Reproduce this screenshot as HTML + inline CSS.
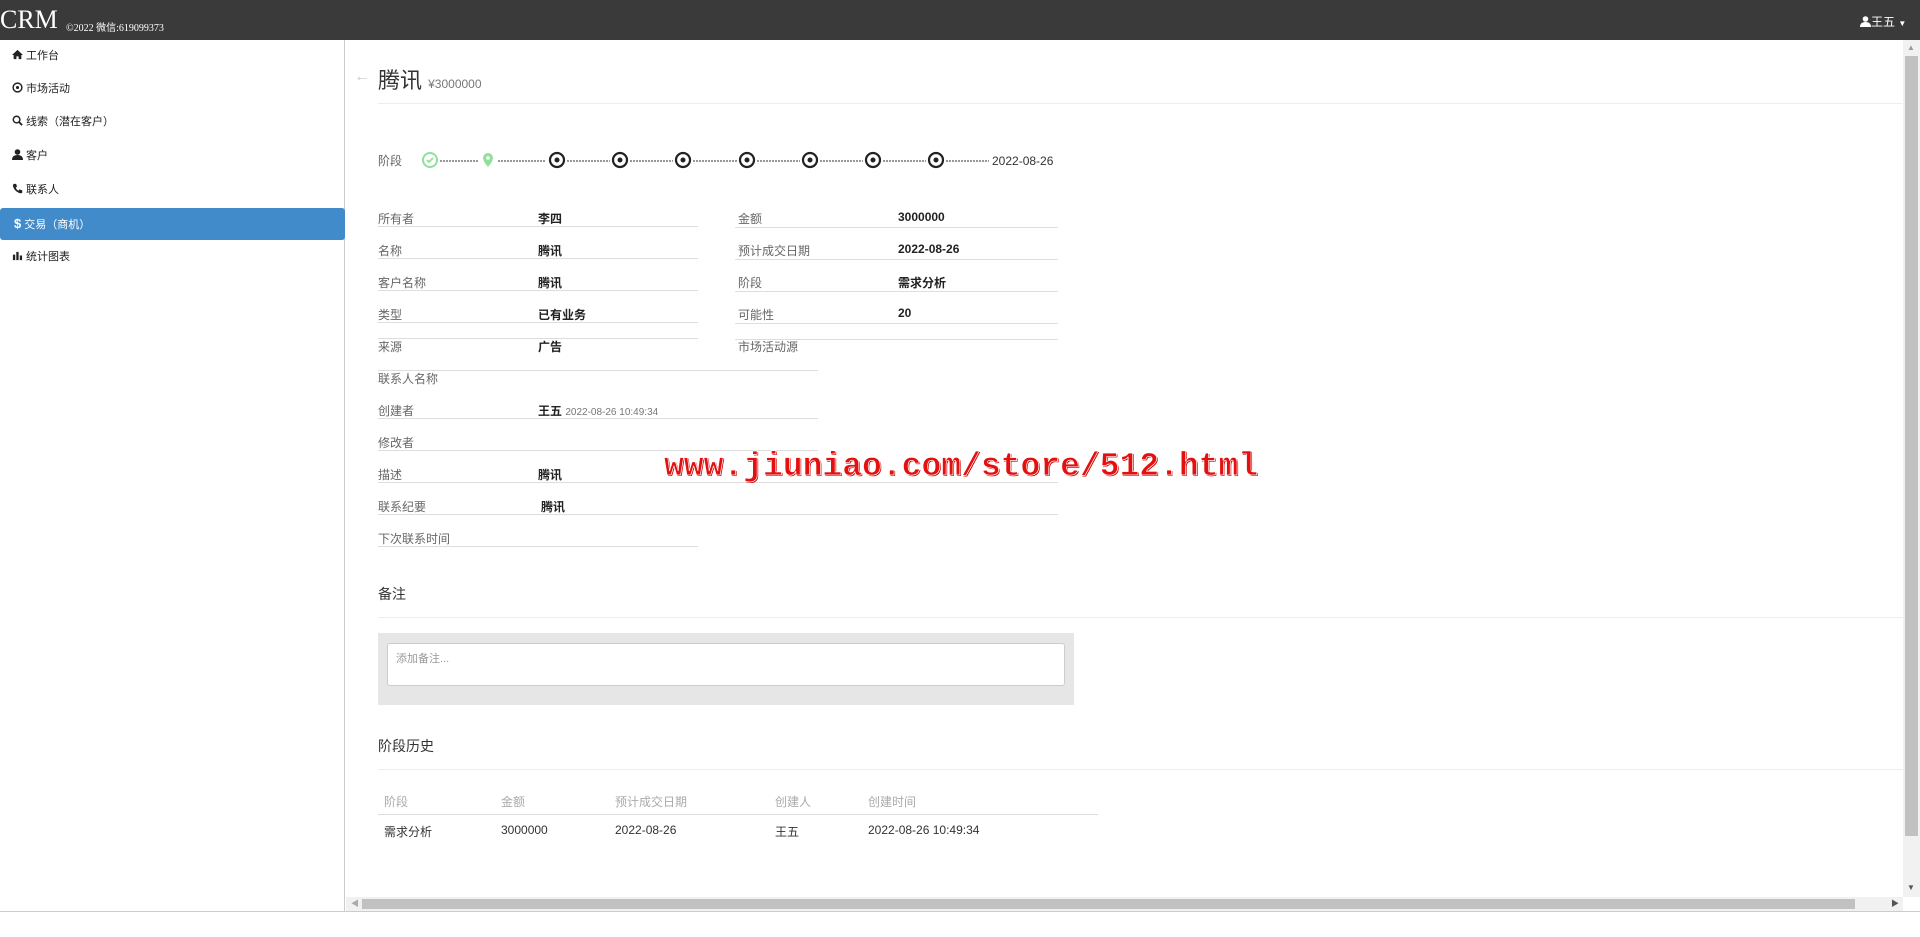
<!DOCTYPE html>
<html><head><meta charset="utf-8"><style>
*{margin:0;padding:0;box-sizing:border-box}
body{width:1920px;height:937px;overflow:hidden;background:#fff;font-family:"Liberation Sans","Noto Sans CJK SC",sans-serif;font-size:12px;color:#333;position:relative}
.hdr{position:absolute;left:0;top:0;width:1920px;height:40px;background:#3a3a3a;color:#fff}
.logo{position:absolute;left:0;top:5px;font-family:"Liberation Serif",serif;font-size:26px}
.copy{position:absolute;left:66px;top:19px;font-size:10px;font-family:"Liberation Serif","Noto Sans CJK SC",serif}
.user{position:absolute;left:1860px;top:13px;font-size:12px}
.side{position:absolute;left:0;top:40px;width:345px;height:872px;border-right:1px solid #ccc}
.mi{position:absolute;left:12px;height:32px;line-height:32px;font-size:11px;color:#222;white-space:nowrap}
.mi svg{vertical-align:-1px;margin-right:3px}
.act{position:absolute;left:0;top:168px;width:345px;height:32px;background:#428bca;border-radius:3px}
.a{position:absolute;white-space:nowrap}
.lab{color:#666}
.val{font-weight:bold;color:#222}
.ln{position:absolute;height:1px;background:#ddd}
.hr{position:absolute;height:1px;background:#eee}
.wm{position:absolute;left:664px;top:448px;font-family:"Liberation Mono",monospace;font-weight:bold;font-size:33px;color:#e41010;-webkit-text-stroke:0.7px #fff;text-shadow:1px 1px 0 #c00}
</style></head><body>
<div class="hdr"><div class="logo">CRM</div><div class="copy">©2022 微信:619099373</div>
<div class="user"><svg width="11" height="11" viewBox="0 0 11 11" style="vertical-align:-1px"><circle cx="5.5" cy="3" r="2.8" fill="#fff"/><path d="M0 11 Q0 6 5.5 6 Q11 6 11 11Z" fill="#fff"/></svg>王五 <span style="font-size:8px">▼</span></div></div>
<div class="side">
<div class="act"></div>
<div class="mi" style="top:0"><svg width="11" height="11" viewBox="0 0 12 12"><path d="M6 1L0 6.5h1.8V11h3V8h2.4v3h3V6.5H12z" fill="#222"/></svg>工作台</div>
<div class="mi" style="top:33px"><svg width="11" height="11" viewBox="0 0 12 12"><circle cx="6" cy="6" r="4.8" fill="none" stroke="#222" stroke-width="1.6"/><circle cx="6" cy="6" r="1.7" fill="#222"/></svg>市场活动</div>
<div class="mi" style="top:66px"><svg width="11" height="11" viewBox="0 0 12 12"><circle cx="5" cy="5" r="3.6" fill="none" stroke="#222" stroke-width="1.6"/><path d="M7.5 7.5L11 11" stroke="#222" stroke-width="2"/></svg>线索（潜在客户）</div>
<div class="mi" style="top:100px"><svg width="11" height="11" viewBox="0 0 11 11"><circle cx="5.5" cy="3" r="2.8" fill="#222"/><path d="M0 11 Q0 6 5.5 6 Q11 6 11 11Z" fill="#222"/></svg>客户</div>
<div class="mi" style="top:134px"><svg width="11" height="11" viewBox="0 0 12 12"><path d="M2 1l2.5 0 1 3-1.5 1.2q1 2.3 3 3.3L8.2 7l3 1v2.5Q10 12 7 10.5 2 8 1 3Q1 1.5 2 1z" fill="#222"/></svg>联系人</div>
<div class="mi" style="top:168px;color:#fff;left:14px"><b style="font-size:13px">$</b> 交易（商机）</div>
<div class="mi" style="top:201px"><svg width="11" height="11" viewBox="0 0 12 12"><path d="M1 5h2.5v6H1zM4.7 2h2.5v9H4.7zM8.5 6H11v5H8.5z" fill="#222"/></svg>统计图表</div>
</div>
<div class="a" style="left:354px;top:68px;color:#ccc;font-size:16px">←</div>
<div class="a" style="left:378px;top:63px;font-size:22px;color:#333">腾讯 <span style="font-size:12px;color:#777">¥3000000</span></div>
<div class="hr" style="left:378px;top:103px;width:1525px"></div>
<div class="a lab" style="left:378px;top:152px">阶段</div>
<svg class="a" style="left:420px;top:150px" width="640" height="20">
<circle cx="10" cy="10" r="7" fill="none" stroke="#90e09b" stroke-width="2"/><path d="M7 10l2 2 4-4" stroke="#90e09b" stroke-width="1.8" fill="none"/>
<path d="M68 17 Q63 11 63 8 a5 5 0 0 1 10 0 Q73 11 68 17Z" fill="#90e09b"/><circle cx="68" cy="8" r="1.8" fill="#fff"/>
<g fill="none" stroke="#222" stroke-width="2.2">
<circle cx="137" cy="10" r="7"/><circle cx="200" cy="10" r="7"/><circle cx="263" cy="10" r="7"/><circle cx="327" cy="10" r="7"/><circle cx="390" cy="10" r="7"/><circle cx="453" cy="10" r="7"/><circle cx="516" cy="10" r="7"/></g>
<g fill="#222"><circle cx="137" cy="10" r="2.5"/><circle cx="200" cy="10" r="2.5"/><circle cx="263" cy="10" r="2.5"/><circle cx="327" cy="10" r="2.5"/><circle cx="390" cy="10" r="2.5"/><circle cx="453" cy="10" r="2.5"/><circle cx="516" cy="10" r="2.5"/></g>
<g stroke="#333" stroke-width="1" stroke-dasharray="2 1"><path d="M20 11h38M78 11h48M147 11h43M210 11h43M273 11h44M337 11h43M400 11h43M463 11h43M526 11h43"/></g>
<text x="572" y="15" font-family="Liberation Sans" font-size="12" fill="#333">2022-08-26</text>
</svg>
<div class="a lab" style="left:378px;top:210px">所有者</div><div class="a val" style="left:538px;top:210px">李四</div><div class="ln" style="left:378px;top:226px;width:320px"></div>
<div class="a lab" style="left:738px;top:210px">金额</div><div class="a val" style="left:898px;top:210px">3000000</div><div class="ln" style="left:735px;top:227px;width:323px"></div>
<div class="a lab" style="left:378px;top:242px">名称</div><div class="a val" style="left:538px;top:242px">腾讯</div><div class="ln" style="left:378px;top:258px;width:320px"></div>
<div class="a lab" style="left:738px;top:242px">预计成交日期</div><div class="a val" style="left:898px;top:242px">2022-08-26</div><div class="ln" style="left:735px;top:259px;width:323px"></div>
<div class="a lab" style="left:378px;top:274px">客户名称</div><div class="a val" style="left:538px;top:274px">腾讯</div><div class="ln" style="left:378px;top:290px;width:320px"></div>
<div class="a lab" style="left:738px;top:274px">阶段</div><div class="a val" style="left:898px;top:274px">需求分析</div><div class="ln" style="left:735px;top:291px;width:323px"></div>
<div class="a lab" style="left:378px;top:306px">类型</div><div class="a val" style="left:538px;top:306px">已有业务</div><div class="ln" style="left:378px;top:322px;width:320px"></div>
<div class="a lab" style="left:738px;top:306px">可能性</div><div class="a val" style="left:898px;top:306px">20</div><div class="ln" style="left:735px;top:323px;width:323px"></div>
<div class="ln" style="left:378px;top:338px;width:320px"></div><div class="ln" style="left:735px;top:339px;width:323px"></div>
<div class="a lab" style="left:378px;top:338px">来源</div><div class="a val" style="left:538px;top:338px">广告</div>
<div class="a lab" style="left:738px;top:338px">市场活动源</div>
<div class="ln" style="left:378px;top:370px;width:440px"></div>
<div class="a lab" style="left:378px;top:370px">联系人名称</div>
<div class="a lab" style="left:378px;top:402px">创建者</div><div class="a val" style="left:538px;top:402px">王五 <span style="font-weight:normal;color:#777;font-size:10px">2022-08-26 10:49:34</span></div><div class="ln" style="left:378px;top:418px;width:440px"></div>
<div class="a lab" style="left:378px;top:434px">修改者</div><div class="ln" style="left:378px;top:450px;width:440px"></div>
<div class="a lab" style="left:378px;top:466px">描述</div><div class="a val" style="left:538px;top:466px">腾讯</div><div class="ln" style="left:378px;top:482px;width:680px"></div>
<div class="a lab" style="left:378px;top:498px">联系纪要</div><div class="a val" style="left:541px;top:498px">腾讯</div><div class="ln" style="left:378px;top:514px;width:680px"></div>
<div class="a lab" style="left:378px;top:530px">下次联系时间</div><div class="ln" style="left:378px;top:546px;width:320px"></div>
<div class="wm">www.jiuniao.com/store/512.html</div>
<div class="a" style="left:378px;top:584px;font-size:14px">备注</div>
<div class="hr" style="left:378px;top:617px;width:1525px"></div>
<div class="a" style="left:378px;top:633px;width:696px;height:72px;background:#e6e6e6"></div>
<div class="a" style="left:387px;top:643px;width:678px;height:43px;background:#fff;border:1px solid #ccc;border-radius:3px;color:#999;padding:6px 8px;font-size:11px">添加备注...</div>
<div class="a" style="left:378px;top:736px;font-size:14px">阶段历史</div>
<div class="hr" style="left:378px;top:769px;width:1525px"></div>
<div class="a" style="left:384px;top:793px;color:#aaa">阶段</div><div class="a" style="left:501px;top:793px;color:#aaa">金额</div><div class="a" style="left:615px;top:793px;color:#aaa">预计成交日期</div><div class="a" style="left:775px;top:793px;color:#aaa">创建人</div><div class="a" style="left:868px;top:793px;color:#aaa">创建时间</div>
<div class="ln" style="left:378px;top:814px;width:720px"></div>
<div class="a" style="left:384px;top:823px">需求分析</div><div class="a" style="left:501px;top:823px">3000000</div><div class="a" style="left:615px;top:823px">2022-08-26</div><div class="a" style="left:775px;top:823px">王五</div><div class="a" style="left:868px;top:823px">2022-08-26 10:49:34</div>
<div class="a" style="left:1903px;top:40px;width:17px;height:857px;background:#f1f1f1"></div>
<div class="a" style="left:1905px;top:56px;width:13px;height:780px;background:#c1c1c1"></div>
<div class="a" style="left:1907px;top:43px;color:#999;font-size:8px">▲</div>
<div class="a" style="left:1907px;top:883px;color:#555;font-size:8px">▼</div>
<div class="a" style="left:346px;top:897px;width:1557px;height:14px;background:#f1f1f1"></div>
<div class="a" style="left:362px;top:899px;width:1493px;height:10px;background:#c1c1c1"></div>
<div class="a" style="left:351px;top:898px;color:#aaa;font-size:8px">◀</div>
<div class="a" style="left:1891px;top:898px;color:#555;font-size:8px">▶</div>
<div class="a" style="left:0;top:911px;width:1920px;height:1px;background:#ccc"></div>
</body></html>
